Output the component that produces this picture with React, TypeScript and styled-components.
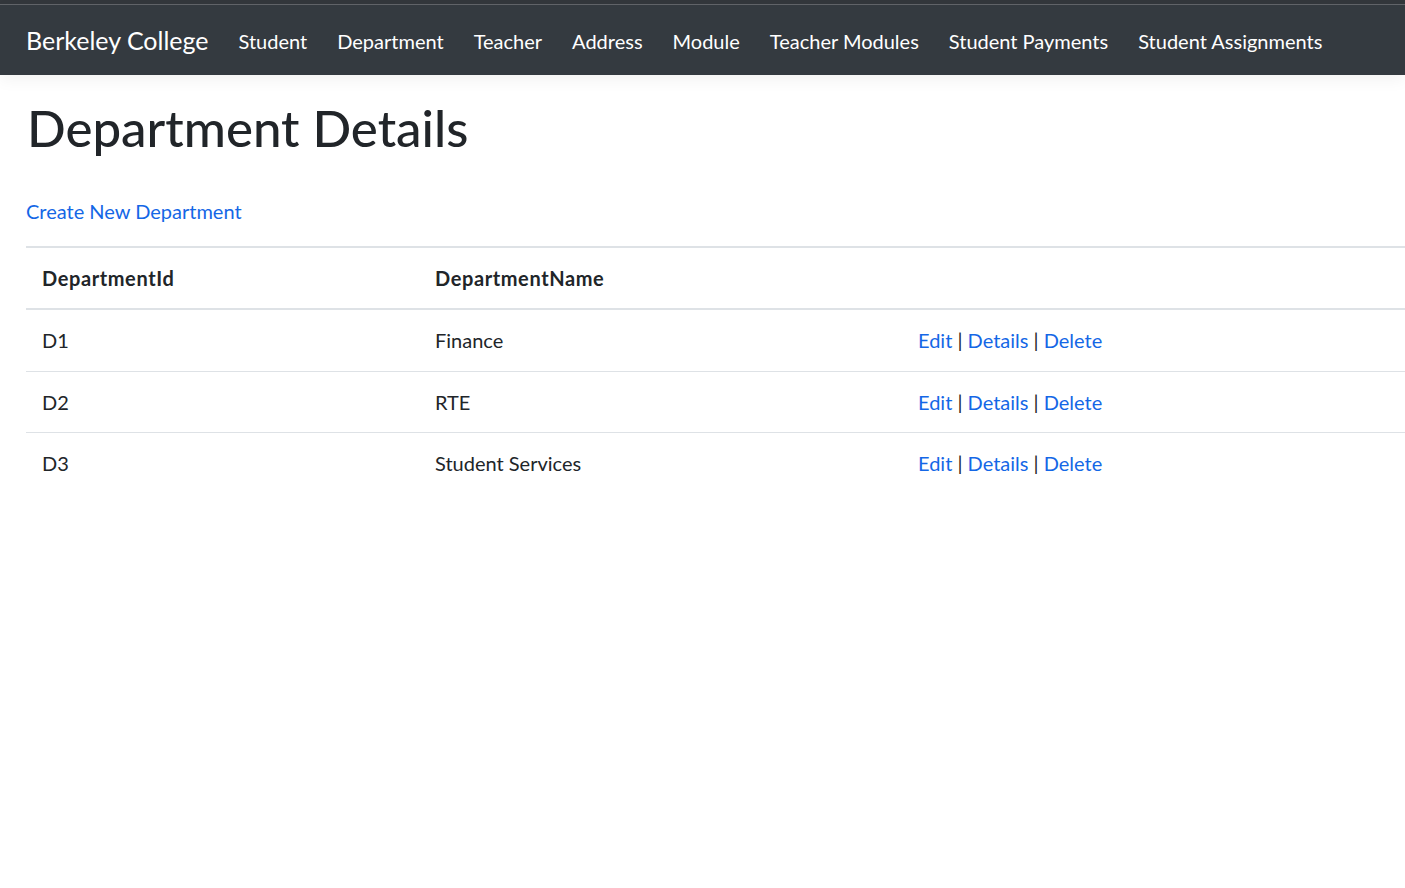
import React from "react";
import styled, { createGlobalStyle } from "styled-components";

const GlobalStyle = createGlobalStyle`
  html, body { margin: 0; padding: 0; background: #fff; }
  body {
    font-family: "Lato", "Liberation Sans", sans-serif;
    font-size: 20px;
    line-height: 1.5;
    color: #212529;
  }
  * { box-sizing: border-box; }
`;

const WindowEdge = styled.div`
  height: 5px;
  background: #33373c;
  border-bottom: 1px solid #62656a;
`;

const NavBar = styled.nav`
  height: 70px;
  background: #343a40;
  display: flex;
  align-items: center;
  padding: 2px 26px 0;
  box-shadow: 0 5px 15px rgba(0, 0, 0, 0.05);
  margin-bottom: 22px;
`;

const Brand = styled.a`
  font-size: 25px;
  color: #fff;
  text-decoration: none;
  margin-right: 30px;
  line-height: 1.5;
`;

const NavList = styled.ul`
  list-style: none;
  margin: 0;
  padding: 0;
  display: flex;
  gap: 30px;
`;

const NavLink = styled.a`
  color: #fff;
  text-decoration: none;
  font-size: 20px;
`;

const Main = styled.main`
  padding-left: 26px;
`;

const Title = styled.h1`
  margin: 0 0 38px;
  font-size: 51px;
  font-weight: 500;
  line-height: 1.2;
  padding-left: 1px;
`;

const Para = styled.p`
  margin: 0 0 20px;
`;

const Link = styled.a`
  color: #1467e6;
  text-decoration: none;
`;

const Table = styled.table`
  width: 100%;
  table-layout: fixed;
  border-collapse: collapse;
`;

const Th = styled.th`
  text-align: left;
  font-weight: 700;
  letter-spacing: 0.6px;
  padding: 15px 15px 15px 16px;
  border-top: 2px solid #dee2e6;
  border-bottom: 2px solid #dee2e6;
`;

const Tr = styled.tr<{ $last?: boolean }>`
  border-bottom: ${(p) => (p.$last ? "none" : "1px solid #dee2e6")};
`;

const Td = styled.td`
  padding: 15.25px 15px 15.25px 16px;
  vertical-align: top;
`;

const Sep = styled.span`
  color: #212529;
`;

const rows = [
  { id: "D1", name: "Finance" },
  { id: "D2", name: "RTE" },
  { id: "D3", name: "Student Services" },
];

const navItems = [
  "Student",
  "Department",
  "Teacher",
  "Address",
  "Module",
  "Teacher Modules",
  "Student Payments",
  "Student Assignments",
];

export default function App() {
  return (
    <>
      <GlobalStyle />
      <WindowEdge />
      <NavBar>
        <Brand href="#">Berkeley College</Brand>
        <NavList>
          {navItems.map((n) => (
            <li key={n}>
              <NavLink href="#">{n}</NavLink>
            </li>
          ))}
        </NavList>
      </NavBar>
      <Main>
        <Title>Department Details</Title>
        <Para>
          <Link href="#">Create New Department</Link>
        </Para>
        <Table>
          <colgroup>
            <col style={{ width: 393 }} />
            <col style={{ width: 483 }} />
            <col />
          </colgroup>
          <thead>
            <tr>
              <Th>DepartmentId</Th>
              <Th>DepartmentName</Th>
              <Th />
            </tr>
          </thead>
          <tbody>
            {rows.map((r, i) => (
              <Tr key={r.id} $last={i === rows.length - 1}>
                <Td>{r.id}</Td>
                <Td>{r.name}</Td>
                <Td>
                  <Link href="#">Edit</Link> <Sep>|</Sep>{" "}
                  <Link href="#">Details</Link> <Sep>|</Sep>{" "}
                  <Link href="#">Delete</Link>
                </Td>
              </Tr>
            ))}
          </tbody>
        </Table>
      </Main>
    </>
  );
}
